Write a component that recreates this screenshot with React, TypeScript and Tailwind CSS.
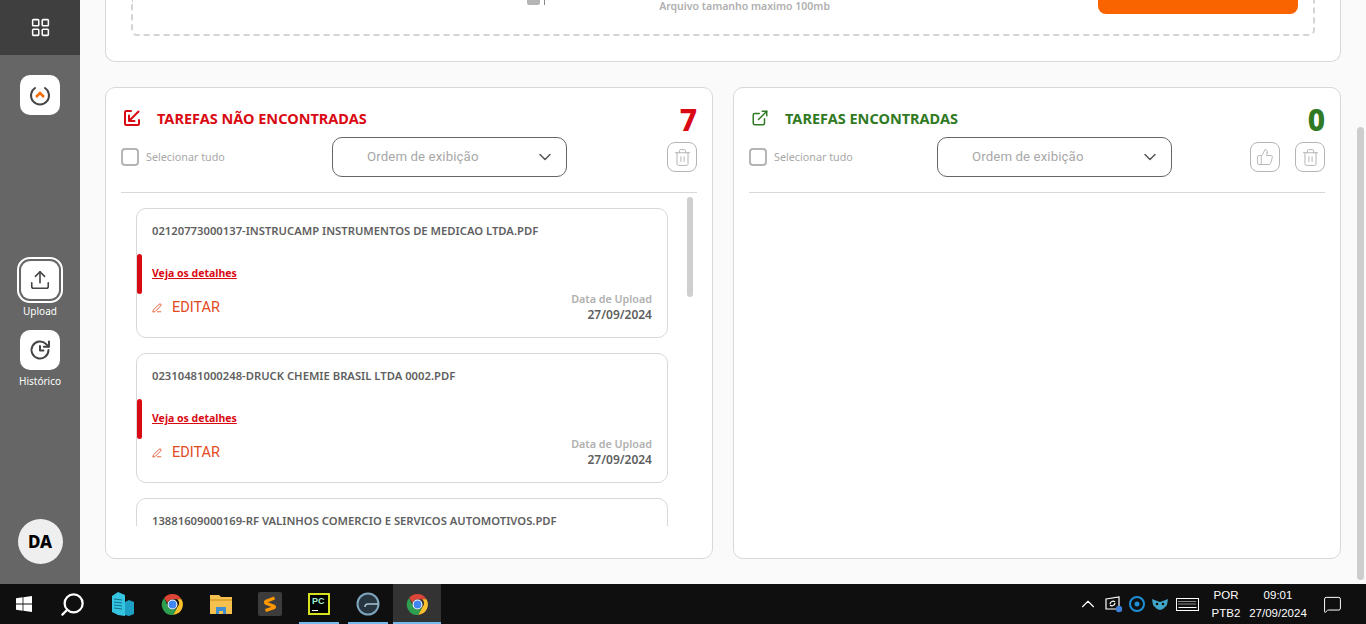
import React from "react";
import { ChevronDown, LayoutGrid, Upload, Trash2, ThumbsUp, ExternalLink, ChevronUp, PenLine, Search, MessageSquare } from "lucide-react";

function Chrome({ size = 25 }: { size?: number }) {
  return (
    <svg width={size} height={size} viewBox="0 0 48 48">
      <path d="M24 4a20 20 0 0 1 17.3 10H24a10 10 0 0 0-9.5 7L7.8 11.6A20 20 0 0 1 24 4z" fill="#db4437" />
      <path d="M41.3 14A20 20 0 0 1 25 44l8.2-14.6A10 10 0 0 0 33 14z" fill="#fbc02d" />
      <path d="M7.8 11.6A20 20 0 0 0 25 44l8.2-14.6a10 10 0 0 1-16.6-.2z" fill="#2e9e4f" />
      <circle cx="24" cy="24" r="9.5" fill="#fff" />
      <circle cx="24" cy="24" r="7.5" fill="#4285f4" />
    </svg>
  );
}

function Card({ name }: { name: string }) {
  return (
    <div className="relative h-[130px] shrink-0 rounded-[10px] border border-[#d8d8d8] bg-white pl-[15px] pr-[15px] pt-[14px]">
      <div className="text-[11.25px] leading-[15px] font-semibold text-[#5f5f5f]">{name}</div>
      <div className="absolute left-0 top-[45px] h-[40px] w-[5px] rounded-[3px] bg-[#d90a14]" />
      <div className="mt-[28px] text-[10.5px] leading-[14px] font-bold text-[#d90a14] underline">Veja os detalhes</div>
      <div className="mt-[12px] flex items-start justify-between">
        <div className="mt-[8px] flex items-center text-[#e2491d]">
          <PenLine size={10} strokeWidth={2} />
          <span className="ml-[10px] font-['Roboto',sans-serif] text-[14.5px] leading-[16px]">EDITAR</span>
        </div>
        <div className="text-right font-semibold leading-[15px]">
          <div className="text-[10.75px] text-[#b0b0b0]">Data de Upload</div>
          <div className="text-[12px] text-[#5f5f5f]">27/09/2024</div>
        </div>
      </div>
    </div>
  );
}

function IconBtn({ children }: { children: React.ReactNode }) {
  return (
    <div className="flex h-[30px] w-[30px] items-center justify-center rounded-[8px] border border-[#b5b5b5] text-[#b5b5b5]">
      {children}
    </div>
  );
}

function PanelHead({ title, count, color, icon, leftW, thumb }: { title: string; count: string; color: string; icon: React.ReactNode; leftW: string; thumb?: boolean }) {
  return (
    <>
      <div className="flex h-[49px] items-center justify-between pl-[2px] pt-[14px]">
        <div className="mb-[3px] flex items-center">
          <div className="flex w-[34px] items-center">{icon}</div>
          <span className={`text-[14.5px] font-bold leading-[20px] ${color}`}>{title}</span>
        </div>
        <span className={`text-[30px] font-extrabold leading-[30px] ${color}`}>{count}</span>
      </div>
      <div className="flex h-[40px] items-center">
        <div className={`flex items-center ${leftW}`}>
          <div className="h-[18px] w-[18px] rounded-[4px] border-2 border-[#b5b5b5] bg-white" />
          <span className="ml-[7px] text-[10.75px] text-[#a8a8a8]">Selecionar tudo</span>
        </div>
        <div className="flex h-[40px] w-[235px] items-center justify-between rounded-[10px] border border-[#666] pl-[34px] pr-[11px]">
          <span className="font-['Roboto',sans-serif] text-[13.25px] tracking-[0.1px] text-[#a8a8a8]">Ordem de exibição</span>
          <ChevronDown size={20} strokeWidth={1.75} className="text-[#555]" />
        </div>
        <div className="ml-auto flex gap-[15px]">
          {thumb && <IconBtn><ThumbsUp size={18} strokeWidth={1.25} /></IconBtn>}
          <IconBtn><Trash2 size={19} strokeWidth={1.25} /></IconBtn>
        </div>
      </div>
      <div className="mt-[15px] h-px bg-[#d8d8d8]" />
    </>
  );
}

function ArrowDownLeftBox({ color }: { color: string }) {
  return (
    <svg width="18" height="18" viewBox="0 0 18 18" fill="none" stroke={color} strokeWidth="2" strokeLinecap="round" strokeLinejoin="round">
      <path d="M8 2H3.5A1.5 1.5 0 0 0 2 3.5v11A1.5 1.5 0 0 0 3.5 16h11a1.5 1.5 0 0 0 1.5-1.5V11" />
      <path d="M15.5 2.5 6.5 11.5" />
      <path d="M6 6.5v5.5h5.5" />
    </svg>
  );
}

export default function App() {
  return (
    <div className="flex h-[624px] w-[1366px] flex-col overflow-hidden bg-[#fafafa] font-['Noto_Sans',sans-serif]">
      <div className="relative flex h-[584px]">
        {/* sidebar */}
        <aside className="flex w-[80px] shrink-0 flex-col items-center bg-[#666]">
          <div className="flex h-[55px] w-full items-center justify-center bg-[#3f3f3f] text-white">
            <LayoutGrid size={21} strokeWidth={1.75} />
          </div>
          <div className="mt-[20px] flex h-[40px] w-[40px] items-center justify-center rounded-[10px] bg-white">
            <svg width="22" height="22" viewBox="0 0 22 22" fill="none">
              <path d="M6 4a9 9 0 1 0 10 0" stroke="#444" strokeWidth="2" strokeLinecap="round" />
              <path d="M7 13l4-4 4 4" stroke="#f96a03" strokeWidth="2.5" />
            </svg>
          </div>
          <div className="mt-[142px] flex h-[46px] w-[46px] items-center justify-center rounded-[13px] border-2 border-white">
            <div className="flex h-[38px] w-[38px] items-center justify-center rounded-[9px] bg-white text-[#444]">
              <Upload size={22} strokeWidth={1.75} />
            </div>
          </div>
          <span className="mt-[1px] text-[10px] leading-[14px] text-white">Upload</span>
          <div className="mt-[12px] flex h-[40px] w-[40px] items-center justify-center rounded-[10px] bg-white text-[#444]">
            <svg width="24" height="24" viewBox="0 0 24 24" fill="none" stroke="currentColor" strokeWidth="2" strokeLinecap="round" strokeLinejoin="round">
              <path d="M20.5 12a8.5 8.5 0 1 1-2.4-5.9L20.5 8.5" />
              <path d="M21 3.5v5.2h-5.2" />
              <path d="M12 8v4.5h3.5" />
            </svg>
          </div>
          <span className="mt-[4px] text-[10px] leading-[14px] text-white">Histórico</span>
          <div className="mb-[20px] mt-auto flex h-[45px] w-[45px] items-center justify-center rounded-full bg-[#efefef] text-[17px] font-extrabold text-black">DA</div>
        </aside>

        {/* content */}
        <main className="flex min-w-0 flex-1 flex-col pl-[25px] pr-[25px]">
          <section className="flex h-[62px] shrink-0 justify-center rounded-b-[10px] border-x border-b border-[#d8d8d8] bg-white px-[25px]">
            <div className="flex h-[36px] w-full items-start justify-end rounded-b-[6px] border-x-2 border-b-2 border-dashed border-[#d4d4d4] pr-[15px]">
              <div className="mr-[268px] flex items-start">
                <div className="h-[5px] w-[13px] rounded-b-[2px] bg-[#b5b5b5]" />
                <div className="ml-[4px] mr-[114px] h-[5px] w-px bg-[#888]" />
                <span className="text-[10.5px] font-semibold leading-[12px] text-[#b0b0b0]">Arquivo tamanho maximo 100mb</span>
              </div>
              <div className="h-[14px] w-[200px] rounded-b-[8px] bg-[#fa6400]" />
            </div>
          </section>

          <div className="mt-[25px] flex h-[472px] gap-[20px]">
            <section className="flex w-[608px] flex-col rounded-[10px] border border-[#d8d8d8] bg-white px-[15px]">
              <PanelHead title="TAREFAS NÃO ENCONTRADAS" count="7" color="text-[#d90a14]" leftW="w-[211px]" icon={<ArrowDownLeftBox color="#d90a14" />} />
              <div className="relative h-[333px] overflow-hidden pl-[15px] pr-[29px] pt-[15px]">
                <div className="flex flex-col gap-[15px]">
                  <Card name="02120773000137-INSTRUCAMP INSTRUMENTOS DE MEDICAO LTDA.PDF" />
                  <Card name="02310481000248-DRUCK CHEMIE BRASIL LTDA 0002.PDF" />
                  <Card name="13881609000169-RF VALINHOS COMERCIO E SERVICOS AUTOMOTIVOS.PDF" />
                </div>
                <div className="absolute right-[4px] top-[4px] h-[100px] w-[6px] rounded-[3px] bg-[#cfcfcf]" />
              </div>
            </section>
            <section className="flex w-[608px] flex-col rounded-[10px] border border-[#d8d8d8] bg-white px-[15px]">
              <PanelHead title="TAREFAS ENCONTRADAS" count="0" color="text-[#2f7a23]" leftW="w-[188px]" thumb icon={<ExternalLink size={18} color="#2f7a23" strokeWidth={2} />} />
            </section>
          </div>
        </main>

        {/* page scrollbar */}
        <div className="absolute bottom-0 right-0 top-0 w-[12px] bg-[#fafafa]">
          <div className="absolute bottom-[4px] left-[3px] top-[127px] w-[7px] rounded-[4px] bg-[#cdcdcd]" />
        </div>
      </div>

      {/* taskbar */}
      <footer className="flex h-[40px] items-stretch bg-[#0f0f0f] font-['Liberation_Sans',sans-serif] text-white">
        <div className="flex w-[48px] items-center justify-center">
          <svg width="16" height="16" viewBox="0 0 16 16" fill="#fff">
            <path d="M0 2.3 6.6 1.3v6.2H0zM7.4 1.2 16 0v7.5H7.4zM0 8.4h6.6v6.3L0 13.7zM7.4 8.4H16V16l-8.6-1.2z" />
          </svg>
        </div>
        <div className="flex w-[48px] items-center justify-center">
          <Search size={27} strokeWidth={2} className="-scale-x-100" />
        </div>
        <div className="ml-[3px] flex w-[48px] items-center justify-center">
          <svg width="22" height="24" viewBox="0 0 22 24">
            <path d="M0 4l6-4 7 3v21l-7-1-6-3z" fill="#36c5e0" />
            <path d="M13 10l4-2 5 2v12l-5 2-4-1z" fill="#1e9fc4" />
            <path d="M2 7l8 1M2 10l8 1M2 13l8 1M2 16l8 1" stroke="#0d6f8c" strokeWidth="1" />
          </svg>
        </div>
        <div className="ml-[1px] flex w-[48px] items-center justify-center"><Chrome /></div>
        <div className="ml-[1px] flex w-[48px] items-center justify-center">
          <svg width="22" height="20" viewBox="0 0 22 20">
            <path d="M0 1h9l2 2h11v17H0z" fill="#f5c04d" />
            <path d="M0 5h22v2H0z" fill="#e0a52e" />
            <path d="M6 13h10v7h-3v-3H9v3H6z" fill="#3f8fd2" />
          </svg>
        </div>
        <div className="ml-[1px] flex w-[48px] items-center justify-center">
          <svg width="24" height="24" viewBox="0 0 24 24" fill="none">
            <rect width="24" height="24" rx="2" fill="#3c3c3c" />
            <path d="M16.5 6 7.5 9.5v1.5l9 3.5v1L7.5 18.5" stroke="#ff9800" strokeWidth="3" strokeLinejoin="bevel" />
          </svg>
        </div>
        <div className="relative ml-[5px] flex w-[40px] items-center justify-center">
          <div className="flex h-[22px] w-[22px] flex-col justify-between border-2 border-[#d7e21f] bg-black p-[2px]">
            <span className="text-[9px] font-bold leading-[9px] text-[#9ff0d0]">PC</span>
            <span className="h-px w-[6px] bg-white" />
          </div>
          <div className="absolute bottom-0 left-0 right-0 h-[2px] bg-[#76b9ed]" />
        </div>
        <div className="relative ml-[9px] flex w-[40px] items-center justify-center">
          <svg width="24" height="24" viewBox="0 0 24 24" fill="none">
            <circle cx="12" cy="12" r="10.5" fill="#263540" stroke="#7fa6bd" strokeWidth="2" />
            <path d="M22 12H12a3 3 0 0 0-3 3" stroke="#a9c3d3" strokeWidth="1.5" />
          </svg>
          <div className="absolute bottom-0 left-0 right-0 h-[2px] bg-[#76b9ed]" />
        </div>
        <div className="relative ml-[5px] flex w-[48px] items-center justify-center bg-[#333]">
          <Chrome />
          <div className="absolute bottom-0 left-0 right-0 h-[2px] bg-[#76b9ed]" />
        </div>

        <div className="ml-auto flex items-center">
          <ChevronUp size={22} strokeWidth={1.25} className="mr-[6px]" />
          <svg className="mr-[6px]" width="18" height="18" viewBox="0 0 18 18" fill="none" stroke="#fff" strokeWidth="1.2">
            <path d="M1 4l13-2v12H1z" />
            <path d="M5 9a3 3 0 0 1 5-2M10 8a3 3 0 0 1-5 2" />
            <circle cx="14" cy="14" r="3.2" fill="#3d7fd6" stroke="none" />
          </svg>
          <svg className="mr-[7px]" width="16" height="16" viewBox="0 0 16 16" fill="none">
            <circle cx="8" cy="8" r="7" stroke="#1f8fd6" strokeWidth="2" />
            <circle cx="8" cy="8" r="2.5" fill="#1f8fd6" />
          </svg>
          <svg className="mr-[8px]" width="16" height="12" viewBox="0 0 16 12">
            <path d="M0 1l5 2 3 1 3-1 5-2-1 6-4 4-3 1-3-1-4-4z" fill="#3fa6c9" />
            <circle cx="5" cy="6" r="1.3" fill="#111" />
            <circle cx="11" cy="6" r="1.3" fill="#111" />
          </svg>
          <svg className="mr-[10px]" width="23" height="13" viewBox="0 0 23 13" fill="none" stroke="#fff">
            <rect x="0.5" y="0.5" width="22" height="12" />
            <path d="M2.5 3.5h18M2.5 6h18" strokeDasharray="1 1" />
            <path d="M2.5 9.5h18" />
          </svg>
          <div className="flex w-[34px] flex-col items-center text-[11.5px] leading-[18px]">
            <span>POR</span>
            <span>PTB2</span>
          </div>
          <div className="ml-[4px] flex w-[62px] flex-col items-center whitespace-nowrap text-[11.5px] leading-[18px]">
            <span>09:01</span>
            <span>27/09/2024</span>
          </div>
          <div className="ml-[14px] mr-[24px] flex">
            <MessageSquare size={19} strokeWidth={1.25} />
          </div>
        </div>
      </footer>
    </div>
  );
}
